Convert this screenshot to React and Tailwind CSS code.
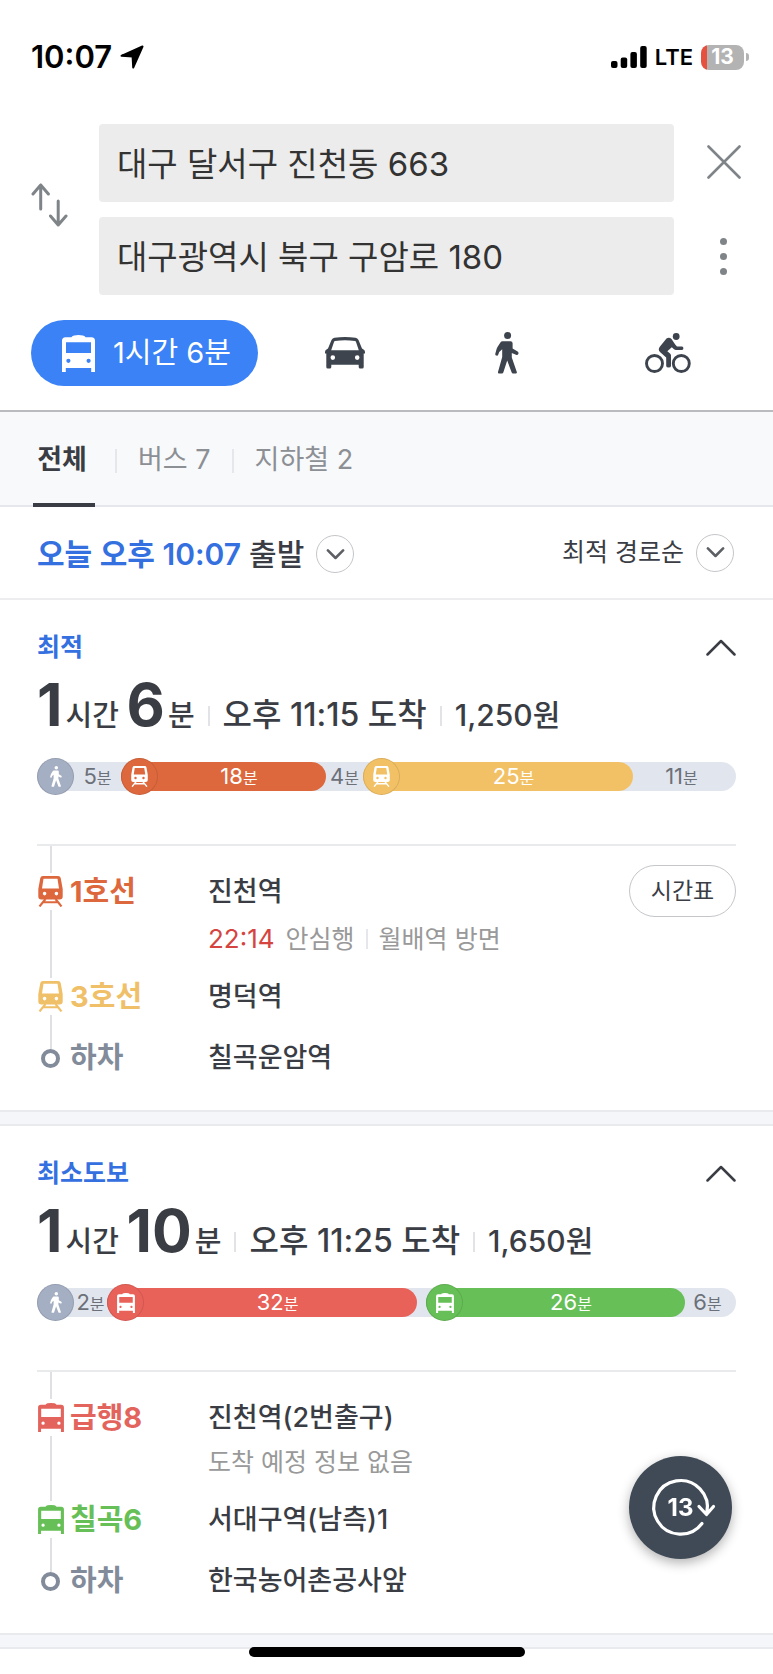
import { useState } from "react";

const BusIcon = ({ className }) => (
  <svg viewBox="0 0 33 37" className={className} fill="currentColor" aria-hidden="true">
    <path
      fillRule="evenodd"
      d="M10 1.6Q11 0 16.5 0T23 1.6L23.500 2.200H29.500Q33 2.200 33 5.700V37H29.200V33H3.800V37H0V5.700Q0 2.200 3.500 2.200H9.500ZM4 7.300V18H29V7.300ZM6.400 23.700a2.100 2.100 0 1 0 0 4.200a2.100 2.100 0 0 0 0-4.200ZM26.600 23.700a2.100 2.100 0 1 0 0 4.200a2.100 2.100 0 0 0 0-4.200Z"
    />
  </svg>
);

const TrainIcon = ({ className }) => (
  <svg viewBox="0 0 25 31" className={className} fill="currentColor" aria-hidden="true">
    <path
      fillRule="evenodd"
      d="M5 0H20Q22.300 0 22.700 2L24.700 13V20.500Q24.700 23.500 21.700 23.500H3.300Q.3 23.500 .3 20.500V13L2.300 2Q2.700 0 5 0ZM5.500 2.800L4 12.400H21L19.500 2.800ZM6.600 15.800a1.800 1.800 0 1 0 0 3.600a1.800 1.800 0 0 0 0-3.600ZM18.400 15.800a1.800 1.800 0 1 0 0 3.600a1.800 1.800 0 0 0 0-3.600Z"
    />
    <path d="M7.500 23L1.500 30.500M17.500 23L23.500 30.500M5.500 26.300H19.500" stroke="currentColor" strokeWidth="2.100" fill="none" />
  </svg>
);

const WalkIcon = ({ className }) => (
  <svg viewBox="0 0 24 42" className={className} fill="currentColor" aria-hidden="true">
    <circle cx="12.600" cy="3.500" r="3.500" />
    <path d="M7.500 9.200H15.500Q17.600 9.200 17.600 11.300V16.500L22.600 19.500Q24 20.500 23.300 22Q22.600 23.500 21 22.800L16.800 20.900V25.500L21.800 40Q22.200 41.500 20.800 41.500H18Q17 41.500 16.700 40.500L12.200 28.500L8.300 40.500Q8 41.500 7 41.500H4Q2.700 41.500 3 40L7.200 25V17.300L4.200 20L3.300 22.500Q2.800 24 1.400 23.600Q0 23.200 .3 21.700L1.600 17Q2 15.800 2.800 14.500L5.400 10.500Q6.200 9.200 7.500 9.200Z" />
  </svg>
);

const CarIcon = ({ className }) => (
  <svg viewBox="0 0 40 32" className={className} fill="currentColor" aria-hidden="true">
    <path
      fillRule="evenodd"
      d="M9.500 .8Q20-.8 30.500 .8Q32.500 1.200 33.500 3L37 11.500L38.500 12.500Q40 13 40 15V16.500H38.700V30Q38.700 31.500 37.200 31.500H35.200Q33.700 31.500 33.700 30V27.800H6.300V30Q6.300 31.500 4.800 31.500H2.800Q1.300 31.500 1.300 30V16.500H0V15Q0 13 1.500 12.500L3 11.500L6.500 3Q7.500 1.200 9.500 .8ZM10 4Q9.300 4.100 9 5L6.200 13.200H33.800L31 5Q30.700 4.100 30 4Q20 2.600 10 4ZM7.800 18.300a2.300 2.300 0 1 0 0 4.600a2.300 2.300 0 0 0 0-4.600ZM32.200 18.300a2.300 2.300 0 1 0 0 4.600a2.300 2.300 0 0 0 0-4.600Z"
    />
  </svg>
);

const BikeIcon = ({ className }) => (
  <svg viewBox="0 0 46 40" className={className} fill="currentColor" aria-hidden="true">
    <circle cx="9.500" cy="30.500" r="8" fill="none" stroke="currentColor" strokeWidth="2.900" />
    <circle cx="36.300" cy="30.500" r="8" fill="none" stroke="currentColor" strokeWidth="2.900" />
    <circle cx="31.200" cy="3.500" r="3.400" />
    <path d="M21.500 5.600Q24 3.900 26.500 5.900L30.200 11.600L32 13.500H37Q38.400 13.700 38.400 15.300T37 17H31Q29.800 17 29 16.200L26.800 14.200L22.300 18.300L25 20.400Q26 21.300 26 22.500V33Q25.900 34.600 23.600 34.600T21.200 33V24.500L15 19Q12.500 16.300 15 13.500Z" />
  </svg>
);

const Chevron = ({ up, className }) => (
  <svg viewBox="0 0 30 17" className={className} fill="none" stroke="currentColor" strokeLinecap="round" strokeLinejoin="round" aria-hidden="true">
    <path d={up ? "M1.500 15.500L15 2L28.500 15.500" : "M3 2L15 14L27 2"} />
  </svg>
);

const ICONS = { walk: WalkIcon, train: TrainIcon, bus: BusIcon };

const routes = [
  {
    title: "최적",
    minutes: "6",
    arrival: "오후 11:15 도착",
    fare: "1,250원",
    bar: [
      { icon: "walk", size: 84, time: "5", badge: "bg-[#a5afc3]" },
      { icon: "train", size: 205, time: "18", badge: "bg-[#dd683d]", fill: "bg-[#dd683d]" },
      { size: 37, time: "4" },
      { icon: "train", size: 270, time: "25", badge: "bg-[#f3c165]", fill: "bg-[#f3c165]" },
      { size: 103, time: "11", last: true },
    ],
    steps: [
      { icon: "train", color: "text-[#dd683d]", line: "1호선", stop: "진천역", time: "22:14", bound: "안심행", toward: "월배역 방면" },
      { icon: "train", color: "text-[#f0c069]", line: "3호선", stop: "명덕역" },
      { line: "하차", color: "text-[#828b9a]", stop: "칠곡운암역" },
    ],
  },
  {
    title: "최소도보",
    minutes: "10",
    arrival: "오후 11:25 도착",
    fare: "1,650원",
    bar: [
      { icon: "walk", size: 70, time: "2", badge: "bg-[#a5afc3]" },
      { icon: "bus", size: 310, time: "32", badge: "bg-[#e8625a]", fill: "bg-[#e8625a]" },
      { size: 9 },
      { icon: "bus", size: 259, time: "26", badge: "bg-[#67bf57]", fill: "bg-[#67bf57]" },
      { size: 51, time: "6", last: true },
    ],
    steps: [
      { icon: "bus", color: "text-[#e2645d]", line: "급행8", stop: "진천역(2번출구)", note: "도착 예정 정보 없음" },
      { icon: "bus", color: "text-[#67bf57]", line: "칠곡6", stop: "서대구역(남측)1" },
      { line: "하차", color: "text-[#828b9a]", stop: "한국농어촌공사앞" },
    ],
  },
];

const StatusBar = () => (
  <div className="flex items-center justify-between pt-9 pl-[31px] pr-6 h-[78px] text-black">
    <div className="flex items-center gap-2">
      <span className="text-[31px] leading-[42px] font-semibold">10:07</span>
      <svg viewBox="0 0 24 24" className="w-6 h-6" fill="currentColor" aria-hidden="true">
        <path
          d="M22.500 1.500L13.200 22.500L12.600 11.400L1.500 10.800Z"
          stroke="currentColor"
          strokeWidth="2"
          strokeLinejoin="round"
        />
      </svg>
    </div>
    <div className="flex items-center gap-2">
      <svg viewBox="0 0 36 22" className="w-9 h-[22px]" fill="currentColor" aria-hidden="true">
        <rect x="0" y="15" width="6.500" height="7" rx="2" />
        <rect x="9.700" y="11.500" width="6.500" height="10.500" rx="2" />
        <rect x="19.400" y="6" width="6.500" height="16" rx="2" />
        <rect x="29.200" y="0" width="6.500" height="22" rx="2" />
      </svg>
      <span className="text-[22px] leading-8 font-semibold">LTE</span>
      <div className="flex items-center gap-0.5">
        <div className="flex items-center justify-center w-[43px] h-[25px] rounded-lg bg-linear-to-r from-[#e5503f] from-14% to-[#b3b3b3] to-14% text-[21px] leading-6 font-bold text-white">
          13
        </div>
        <div className="w-[3px] h-2 rounded-r-full bg-[#b3b3b3]" />
      </div>
    </div>
  </div>
);

const SearchForm = () => {
  const [from, setFrom] = useState("대구 달서구 진천동 663");
  const [to, setTo] = useState("대구광역시 북구 구암로 180");
  const field = "w-full h-[78px] px-[18px] pb-0.5 rounded-sm bg-[#ececec] text-[33px] text-[#333] outline-none";

  return (
    <div className="flex items-center mt-[46px] pl-[31px]">
      <button aria-label="출발 도착 바꾸기" className="w-[68px] pb-[10px] text-[#7f8489]">
        <svg viewBox="0 0 37 44" className="w-[37px] h-11" fill="none" stroke="currentColor" strokeWidth="3" strokeLinecap="round" strokeLinejoin="round">
          <path d="M9.700 26V2M2 11L9.700 2L17.400 11M27.200 18V42M19.500 33L27.200 42L35 33" />
        </svg>
      </button>
      <div className="flex-1 flex flex-col gap-[15px]">
        <input aria-label="출발지" className={field} value={from} onChange={(e) => setFrom(e.target.value)} />
        <input aria-label="도착지" className={field} value={to} onChange={(e) => setTo(e.target.value)} />
      </div>
      <div className="w-[99px] flex flex-col gap-[15px] text-[#7f8489]">
        <button aria-label="닫기" className="h-[78px] pb-0.5 flex items-center justify-center">
          <svg viewBox="0 0 34 34" className="w-[34px] h-[34px]" stroke="currentColor" strokeWidth="2.600" strokeLinecap="round">
            <path d="M1.500 1.500L32.500 32.500M32.500 1.500L1.500 32.500" />
          </svg>
        </button>
        <button aria-label="더보기" className="h-[78px] flex flex-col items-center justify-center gap-2">
          <span className="w-[7px] h-[7px] rounded-full bg-current" />
          <span className="w-[7px] h-[7px] rounded-full bg-current" />
          <span className="w-[7px] h-[7px] rounded-full bg-current" />
        </button>
      </div>
    </div>
  );
};

const Modes = () => (
  <div className="flex items-center mt-[25px] pl-[31px] pr-6 pb-6 border-b-2 border-[#b9bbbe] text-[#3d444e]">
    <button className="flex items-center justify-center gap-[18px] w-[227px] h-[66px] mr-1.5 pl-1 rounded-full bg-[#3a82f6] text-[29px] text-white">
      <BusIcon className="w-[33px] h-[37px]" />
      <span>1시간 6분</span>
    </button>
    <button aria-label="자동차" className="flex-1 flex justify-center">
      <CarIcon className="w-10 h-8" />
    </button>
    <button aria-label="도보" className="flex-1 flex justify-center">
      <WalkIcon className="w-6 h-[42px]" />
    </button>
    <button aria-label="자전거" className="flex-1 flex justify-center">
      <BikeIcon className="w-[46px] h-10" />
    </button>
  </div>
);

const Tabs = () => (
  <nav className="flex items-center h-[95px] pt-1 pl-[33px] bg-[#f8f9fb] border-b-2 border-[#e6e7ec] text-[27px] text-[#8c8f94]">
    <button className="self-stretch w-[62px] -mb-0.5 pt-0.5 pr-1 border-b-4 border-[#3a3d44] font-bold text-[#3a3d44]">전체</button>
    <span className="w-0.5 h-6 ml-5 bg-[#e6e7ec]" />
    <button className="px-[21px]">버스 7</button>
    <span className="w-0.5 h-6 bg-[#e6e7ec]" />
    <button className="px-[21px]">지하철 2</button>
  </nav>
);

const RoundArrow = () => (
  <span className="flex items-center justify-center w-[38px] h-[38px] rounded-full border border-[#c4c6c9] text-[#5c5f64]">
    <Chevron className="w-[19px] h-[11px] stroke-[4]" />
  </span>
);

const Filters = () => (
  <div className="flex items-center justify-between h-[93px] pl-[37px] pr-[39px] border-b-2 border-[#ededef] text-[#3a3d44]">
    <button className="flex items-center gap-3 pt-[3px] text-[30px] font-medium">
      <span>
        <span className="text-[#3470e0] font-semibold">오늘 오후 10:07</span> 출발
      </span>
      <RoundArrow />
    </button>
    <button className="flex items-center gap-3 text-[25px]">
      <span>최적 경로순</span>
      <RoundArrow />
    </button>
  </div>
);

const TimeBar = ({ parts }) => (
  <div className="flex items-center h-[29px] rounded-full bg-[#e1e6ee]">
    {parts.map((part, i) => {
      const Icon = ICONS[part.icon];
      return (
        <div
          key={i}
          className={`flex items-center h-full min-w-0 basis-0 rounded-full ${part.fill ? `${part.fill} text-white` : "text-[#6c7078]"}`}
          style={{ flexGrow: part.size }}
        >
          {Icon && (
            <span className={`flex items-center justify-center shrink-0 w-[37px] h-[37px] rounded-full border border-black/10 text-white ${part.badge}`}>
              <Icon className={part.icon === "walk" ? "h-[21px] w-3" : part.icon === "train" ? "h-[21px] w-[17px]" : "h-5 w-[18px]"} />
            </span>
          )}
          {part.time && (
            <span className={`flex-1 text-center whitespace-nowrap text-[22px] leading-7 ${part.fill || part.last ? "pr-1.5" : ""}`}>
              {part.time}
              <span className="text-base leading-7">분</span>
            </span>
          )}
        </div>
      );
    })}
  </div>
);

const Step = ({ step, last }) => {
  const Icon = ICONS[step.icon];
  const detail = step.time || step.note;
  return (
    <li className="flex">
      <div className="flex flex-col items-center w-[27px]">
        {last ? (
          <>
            <span className="w-0.5 h-[10px] bg-[#dfe0e4]" />
            <span className="shrink-0 w-[19px] h-[19px] rounded-full border-4 border-[#828b9a]" />
          </>
        ) : (
          <>
            <span className={`flex items-center h-[37px] ${step.color}`}>
              <Icon className={step.icon === "train" ? "w-[25px] h-[31px]" : "w-[26px] h-[29px]"} />
            </span>
            <span className="flex-1 w-0.5 bg-[#dfe0e4]" />
          </>
        )}
      </div>
      <div className={`w-36 pl-1.5 text-[29px] leading-[37px] font-bold ${step.color}`}>{step.line}</div>
      <div className={`flex-1 ${last ? "" : detail ? "pb-[21px]" : "pb-6"}`}>
        <div className="text-[27px] leading-[37px] font-medium">{step.stop}</div>
        {step.time && (
          <div className="flex items-center gap-[11px] mt-[11px] text-[25px] leading-9 text-[#999]">
            <span className="text-[26px] text-[#d5443f]">{step.time}</span>
            <span>{step.bound}</span>
            <span className="w-0.5 h-5 bg-[#e6e7ec]" />
            <span>{step.toward}</span>
          </div>
        )}
        {step.note && <div className="mt-2 text-[25px] leading-9 text-[#999]">{step.note}</div>}
      </div>
      {step.time && (
        <button className="-mt-2 w-[107px] h-[52px] rounded-full border border-[#c4c6c9] text-[23px]">시간표</button>
      )}
    </li>
  );
};

const RouteCard = ({ route }) => (
  <section className="px-[37px] pt-8 pb-[34px] text-[#3a3d44]">
    <div className="flex items-center justify-between">
      <h2 className="text-[25px] leading-[30px] font-bold text-[#3470e0]">{route.title}</h2>
      <button aria-label="접기">
        <Chevron up className="w-[30px] h-[17px] stroke-[2.500]" />
      </button>
    </div>
    <div className="flex items-baseline mt-3 mb-[27px] h-[61px] leading-[61px]">
      <div className="text-[29px] font-medium">
        <span className="mr-[3px] text-[59px] font-bold">1</span>시간{" "}
        <span className="mr-[3px] text-[59px] font-bold">{route.minutes}</span>분
      </div>
      <span className="w-0.5 h-5 mx-[13px] bg-[#e2e3e7]" />
      <div className="text-[32px] font-medium">{route.arrival}</div>
      <span className="w-0.5 h-5 mx-[13px] bg-[#e2e3e7]" />
      <div className="text-[30px] font-medium">{route.fare}</div>
    </div>
    <TimeBar parts={route.bar} />
    <div className="mt-[53px] pl-[13px] border-t-2 border-[#e9eaec]">
      <div className="w-0.5 h-[27px] bg-[#dfe0e4]" />
    </div>
    <ol>
      {route.steps.map((step, i) => (
        <Step key={step.stop} step={step} last={i === route.steps.length - 1} />
      ))}
    </ol>
  </section>
);

const App = () => {
  return (
    <div className="bg-white min-h-screen font-[Inter,'Noto_Sans_CJK_KR',sans-serif]">
      <StatusBar />
      <SearchForm />
      <Modes />
      <Tabs />
      <Filters />
      {routes.map((route) => (
        <div key={route.title}>
          <RouteCard route={route} />
          <div className="h-4 bg-[#f5f6f9] border-y-2 border-[#e9eaee]" />
        </div>
      ))}
      <button
        aria-label="새로고침"
        className="fixed right-[41px] bottom-[115px] flex items-center justify-center w-[103px] h-[103px] rounded-full bg-[#3f4a56] text-white shadow-[0_4px_12px_rgba(0,0,0,0.3)]"
      >
        <svg viewBox="0 0 103 103" className="absolute inset-0" fill="none" stroke="currentColor" strokeWidth="3.200" strokeLinecap="round" strokeLinejoin="round">
          <path d="M73 67.500A26.800 26.800 0 1 1 77.800 57M70 50.500L77.500 58.500L84.500 50.500" />
        </svg>
        <span className="relative text-2xl leading-8 font-bold">13</span>
      </button>
      <div className="fixed bottom-[17px] inset-x-0 flex justify-center">
        <div className="w-[276px] h-[10px] rounded-full bg-black" />
      </div>
    </div>
  );
};

export default App;
